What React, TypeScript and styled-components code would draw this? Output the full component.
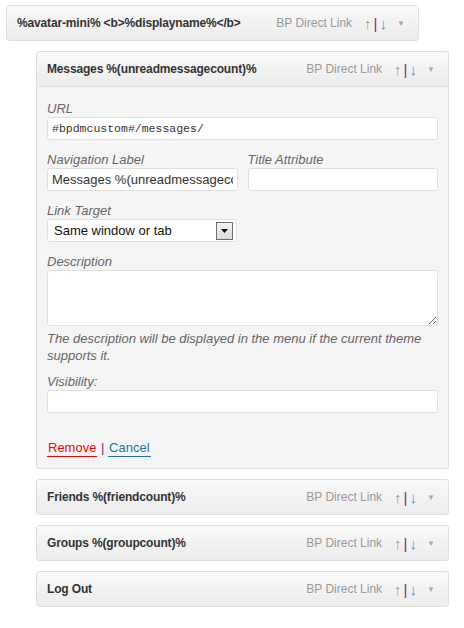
import React from 'react';
import styled, { createGlobalStyle } from 'styled-components';

const GlobalStyle = createGlobalStyle`
  body {
    margin: 0;
    background: #fff;
    font-family: "Liberation Sans", Arial, sans-serif;
    font-size: 13px;
    color: #333;
  }
`;

const MenuList = styled.ul`
  list-style: none;
  margin: 0;
  padding: 5px 0 0 6px;
  width: 441px;
`;

const MenuItem = styled.li<{ depth: number }>`
  width: 411px;
  margin: 0 0 10px ${props => props.depth * 30}px;
  border: 1px solid #dfdfdf;
  border-radius: 3px;
  box-shadow: inset 0 1px 0 #fff;
  overflow: hidden;
  background: #f5f5f5;
`;

const ItemHandle = styled.div<{ open?: boolean }>`
  display: flex;
  align-items: center;
  height: 34px;
  padding: 0 12px 0 10px;
  background: linear-gradient(to bottom, #f9f9f9, #ececec);
  border-bottom: ${props => (props.open ? '1px solid #dfdfdf' : 'none')};
`;

const ItemTitle = styled.span`
  flex: 1;
  font-weight: bold;
  font-size: 12px;
  letter-spacing: -0.15px;
  color: #333;
  white-space: nowrap;
`;

const ItemType = styled.span`
  font-size: 12px;
  color: #999;
  margin-right: 12px;
`;

const Arrows = styled.span`
  display: inline-flex;
  align-items: center;
  gap: 2px;
  font-size: 15px;
  line-height: 15px;
  margin-right: 9px;
`;

const Arrow = styled.span<{ tone: string }>`
  color: ${props => props.tone};
`;

const Toggle = styled.span`
  font-size: 8px;
  color: #aaa;
  width: 10px;
  text-align: center;
`;

const Settings = styled.div`
  padding: 13px 10px 12px 10px;
`;

const Field = styled.div<{ gap?: number }>`
  margin-bottom: ${props => props.gap ?? 11}px;
`;

const Row = styled.div`
  display: flex;
  gap: 10px;
  margin-bottom: 11px;

  & > div {
    flex: 1;
  }
`;

const Label = styled.label`
  display: block;
  font-style: italic;
  color: #666;
  font-size: 13px;
  line-height: 17px;
`;

const TextInput = styled.input<{ mono?: boolean }>`
  box-sizing: border-box;
  display: block;
  width: 100%;
  height: 23px;
  padding: 0 4px;
  border: 1px solid #dfdfdf;
  border-radius: 3px;
  background: #fff;
  color: #333;
  font-family: ${props =>
    props.mono ? '"Liberation Mono", "DejaVu Sans Mono", monospace' : '"Liberation Sans", Arial, sans-serif'};
  font-size: ${props => (props.mono ? '11.5px' : '13px')};
  outline: none;
`;

const TextArea = styled.textarea`
  box-sizing: border-box;
  display: block;
  width: 100%;
  height: 56px;
  border: 1px solid #dfdfdf;
  border-radius: 3px;
  background: #fff;
  outline: none;
`;

const SelectBox = styled.div`
  box-sizing: border-box;
  display: flex;
  align-items: center;
  width: 190px;
  height: 23px;
  padding: 0 3px 0 6px;
  border: 1px solid #dfdfdf;
  border-radius: 3px;
  background: #fff;
  color: #111;
  font-size: 13px;
`;

const SelectText = styled.span`
  flex: 1;
`;

const SelectButton = styled.span`
  box-sizing: border-box;
  display: flex;
  align-items: center;
  justify-content: center;
  width: 17px;
  height: 18px;
  border: 1px solid #6d6d6d;
  background: linear-gradient(to bottom, #f4f4f4, #dcdcdc);
`;

const Help = styled.p`
  margin: 4px 0 9px;
  font-style: italic;
  color: #666;
  font-size: 13px;
  line-height: 17px;
  width: 380px;
`;

const Actions = styled.div`
  margin-top: 26px;
  font-size: 13px;
  line-height: 17px;
  color: #8b1e8b;
`;

const ActionLink = styled.a<{ tone: string }>`
  color: ${props => props.tone};
  text-decoration: none;
  border-bottom: 1px solid ${props => props.tone};
  padding: 0 1px 1px;
`;

const handles = (
  <>
    <Arrows>
      <Arrow tone="#b59466">↑</Arrow>
      <Arrow tone="#8b1e8b">|</Arrow>
      <Arrow tone="#3a98d4">↓</Arrow>
    </Arrows>
    <Toggle>▼</Toggle>
  </>
);

const Handle: React.FC<{ title: string; open?: boolean }> = ({ title, open }) => (
  <ItemHandle open={open}>
    <ItemTitle>{title}</ItemTitle>
    <ItemType>BP Direct Link</ItemType>
    {handles}
  </ItemHandle>
);

export default function App() {
  return (
    <>
      <GlobalStyle />
      <MenuList>
        <MenuItem depth={0}>
          <Handle title="%avatar-mini% <b>%displayname%</b>" />
        </MenuItem>
        <MenuItem depth={1}>
          <Handle title="Messages %(unreadmessagecount)%" open />
          <Settings>
            <Field>
              <Label>URL</Label>
              <TextInput mono defaultValue="#bpdmcustom#/messages/" />
            </Field>
            <Row>
              <div>
                <Label>Navigation Label</Label>
                <TextInput defaultValue="Messages %(unreadmessagecount)%" />
              </div>
              <div>
                <Label>Title Attribute</Label>
                <TextInput />
              </div>
            </Row>
            <Field>
              <Label>Link Target</Label>
              <SelectBox>
                <SelectText>Same window or tab</SelectText>
                <SelectButton>
                  <svg width="7" height="4" viewBox="0 0 7 4">
                    <path d="M0 0h7L3.5 4z" fill="#000" />
                  </svg>
                </SelectButton>
              </SelectBox>
            </Field>
            <Field gap={0}>
              <Label>Description</Label>
              <TextArea />
            </Field>
            <Help>The description will be displayed in the menu if the current theme supports it.</Help>
            <Field gap={0}>
              <Label>Visibility:</Label>
              <TextInput />
            </Field>
            <Actions>
              <ActionLink tone="#f00" href="#">Remove</ActionLink> |{' '}
              <ActionLink tone="#21759b" href="#">Cancel</ActionLink>
            </Actions>
          </Settings>
        </MenuItem>
        <MenuItem depth={1}>
          <Handle title="Friends %(friendcount)%" />
        </MenuItem>
        <MenuItem depth={1}>
          <Handle title="Groups %(groupcount)%" />
        </MenuItem>
        <MenuItem depth={1}>
          <Handle title="Log Out" />
        </MenuItem>
      </MenuList>
    </>
  );
}
